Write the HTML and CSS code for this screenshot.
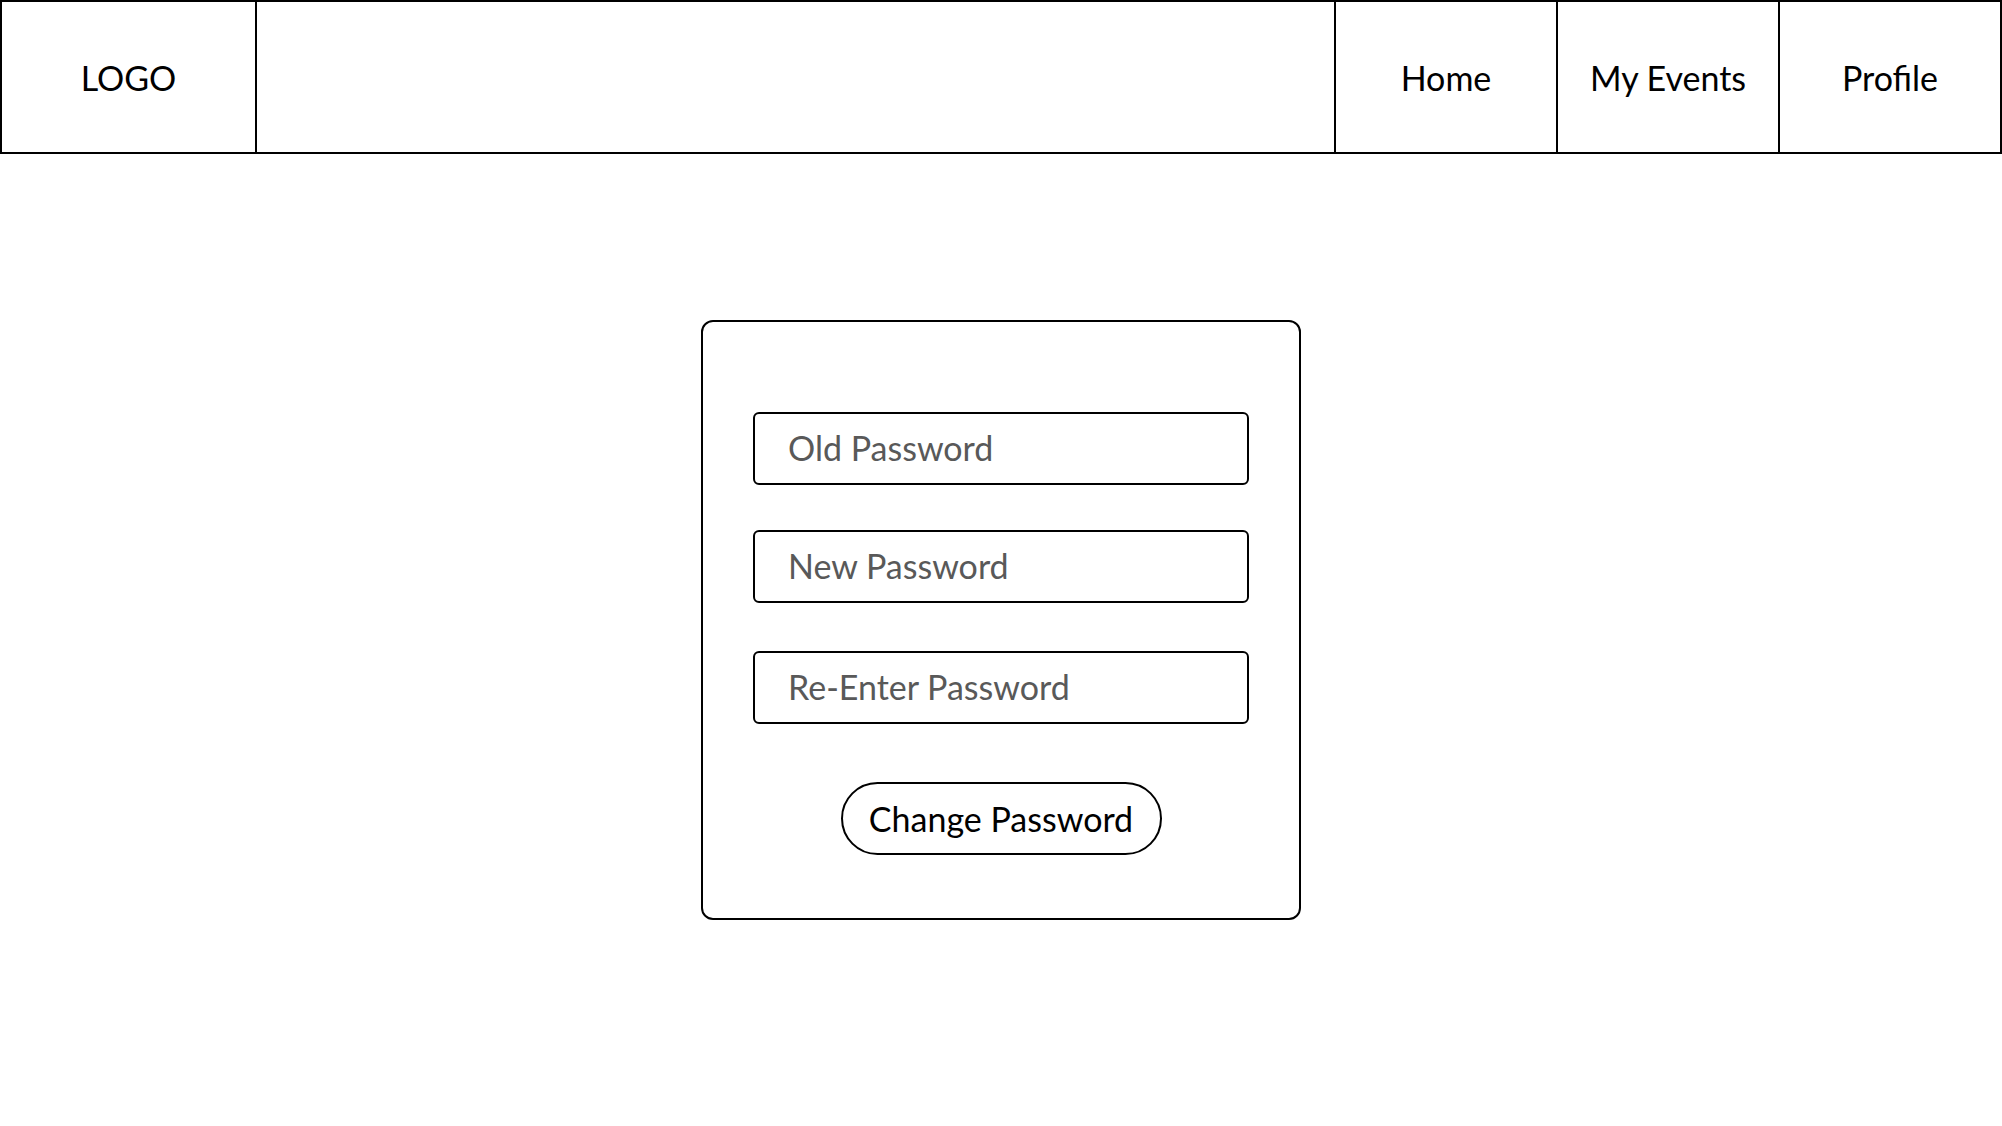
FILE: index.html
```html
<!DOCTYPE html>
<html lang="en">
<head>
  <meta charset="UTF-8">
  <meta name="viewport" content="width=device-width, initial-scale=1.0">
  <title>Change Password</title>
  <link rel="stylesheet" href="styles.css">
</head>
<body>
  <header class="topbar">
    <div class="cell logo">LOGO</div>
    <div class="cell spacer"></div>
    <a class="cell nav-link" href="#">Home</a>
    <a class="cell nav-link" href="#">My Events</a>
    <a class="cell nav-link" href="#">Profile</a>
  </header>

  <main class="page">
    <form class="card" onsubmit="return false">
      <input class="field" type="password" placeholder="Old Password">
      <input class="field" type="password" placeholder="New Password">
      <input class="field" type="password" placeholder="Re-Enter Password">
      <button class="submit" type="submit">Change Password</button>
    </form>
  </main>
</body>
</html>
```

FILE: styles.css
```css
body {
  margin: 0;
  font-family: Lato, "Open Sans", sans-serif;
  background: #fff;
  color: #000;
}
.topbar {
  display: flex;
  height: 150px;
  border: 2px solid #000;
}
.cell {
  display: flex;
  align-items: center;
  justify-content: center;
  font-size: 34px;
  color: #000;
  text-decoration: none;
}
.logo {
  width: 253px;
  border-right: 2px solid #000;
}
.spacer {
  flex: 1;
}
.nav-link {
  width: 220px;
  border-left: 2px solid #000;
}
.page {
  display: flex;
  justify-content: center;
  padding-top: 166px;
}
.card {
  box-sizing: border-box;
  width: 600px;
  height: 600px;
  border: 2px solid #000;
  border-radius: 12px;
  padding: 90px 51px 0;
  display: flex;
  flex-direction: column;
  align-items: center;
}
.field {
  box-sizing: border-box;
  width: 496px;
  height: 73px;
  border: 2px solid #000;
  border-radius: 6px;
  padding: 0 0 2px 33px;
  font-family: inherit;
  font-size: 34px;
  color: #000;
  outline: none;
  margin-bottom: 45px;
}
.field::placeholder {
  color: #595959;
}
.field:nth-of-type(2) {
  margin-bottom: 48px;
}
.field:nth-of-type(3) {
  margin-bottom: 58px;
}
.submit {
  box-sizing: border-box;
  width: 321px;
  height: 73px;
  border: 2px solid #000;
  border-radius: 37px;
  background: #fff;
  font-family: inherit;
  font-size: 34px;
  color: #000;
  cursor: pointer;
}
```
